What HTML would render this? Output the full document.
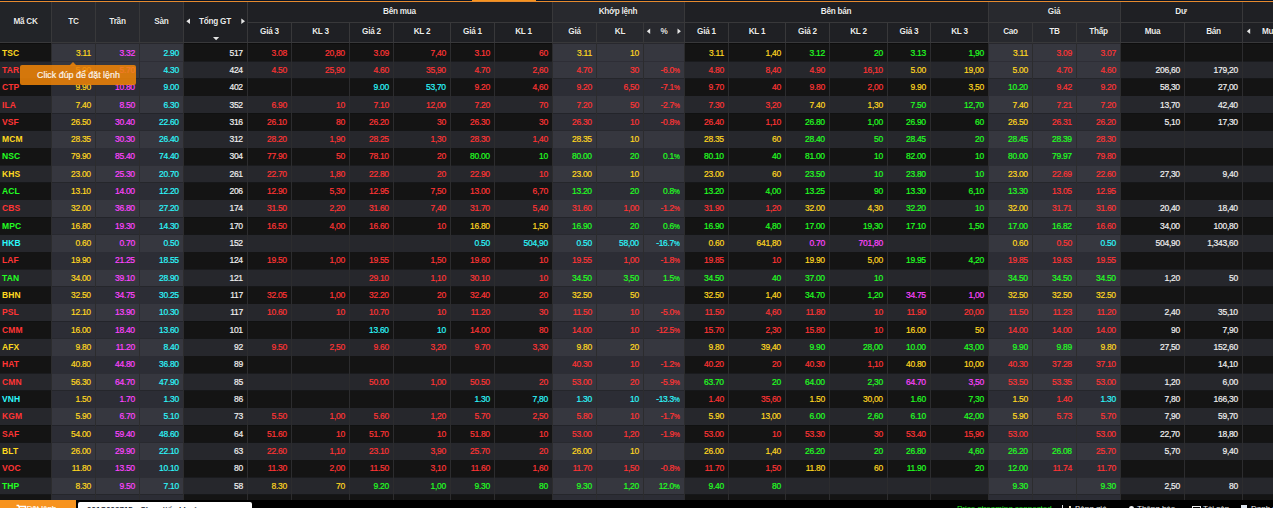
<!DOCTYPE html><html><head><meta charset="utf-8"><style>
*{margin:0;padding:0;box-sizing:border-box}
html,body{width:1273px;height:508px;overflow:hidden;background:#000}
body{position:relative;font-family:"Liberation Sans",sans-serif}
.a{position:absolute}
.t{position:absolute;white-space:nowrap;font-size:8.5px;line-height:11px;text-align:right;letter-spacing:-0.3px;-webkit-text-stroke:0.18px currentColor}
.h{position:absolute;white-space:nowrap;font-size:8.2px;letter-spacing:-0.25px;font-weight:bold;color:#ececec;text-shadow:0 0 1px #000;line-height:10px;text-align:center}
.s{font-weight:bold;text-align:left;font-size:8.5px;letter-spacing:0.1px;-webkit-text-stroke:0}
.pc{font-size:6.5px;letter-spacing:0}
</style></head><body>
<div class="a" style="left:0;top:0;width:1273px;height:1px;background:#0b1628"></div>
<div class="a" style="left:472px;top:0;width:64px;height:2px;background:#f7931e"></div>
<div class="a" style="left:0;top:1px;width:1273px;height:1px;background:#e68a2e"></div>
<div class="a" style="left:0;top:2px;width:1273px;height:40px;background:#1f2024"></div>
<div class="a" style="left:0;top:2px;width:51px;height:40px;background:#222428"></div>
<div class="a" style="left:51px;top:2px;width:132px;height:40px;background:#28292e"></div>
<div class="a" style="left:552px;top:2px;width:132px;height:40px;background:#28292e"></div>
<div class="a" style="left:988px;top:2px;width:132px;height:40px;background:#28292e"></div>
<div class="a" style="left:0;top:42px;width:1273px;height:1px;background:#38383a"></div>
<div class="a" style="left:247px;top:22px;width:1026px;height:1px;background:#38383a"></div>
<div class="a" style="left:0;top:0;width:1910px;height:762px;transform:scale(0.6666667);transform-origin:0 0">
<div class="a" style="left:0;top:64.500px;width:1910px;height:27.650px;background:#141414"></div>
<div class="a" style="left:76.500px;top:64.500px;width:198.000px;height:27.650px;background:#36373f"></div>
<div class="a" style="left:828.000px;top:64.500px;width:198.000px;height:27.650px;background:#36373f"></div>
<div class="a" style="left:1482.000px;top:64.500px;width:198.000px;height:27.650px;background:#36373f"></div>
<div class="a" style="left:0;top:92.150px;width:1910px;height:26.000px;background:#26272c"></div>
<div class="a" style="left:76.500px;top:92.150px;width:198.000px;height:26.000px;background:#36373f"></div>
<div class="a" style="left:828.000px;top:92.150px;width:198.000px;height:26.000px;background:#36373f"></div>
<div class="a" style="left:1482.000px;top:92.150px;width:198.000px;height:26.000px;background:#36373f"></div>
<div class="a" style="left:0;top:118.150px;width:1910px;height:26.000px;background:#141414"></div>
<div class="a" style="left:76.500px;top:118.150px;width:198.000px;height:26.000px;background:#2c2d35"></div>
<div class="a" style="left:828.000px;top:118.150px;width:198.000px;height:26.000px;background:#2c2d35"></div>
<div class="a" style="left:1482.000px;top:118.150px;width:198.000px;height:26.000px;background:#2c2d35"></div>
<div class="a" style="left:0;top:144.150px;width:1910px;height:26.000px;background:#26272c"></div>
<div class="a" style="left:76.500px;top:144.150px;width:198.000px;height:26.000px;background:#36373f"></div>
<div class="a" style="left:828.000px;top:144.150px;width:198.000px;height:26.000px;background:#36373f"></div>
<div class="a" style="left:1482.000px;top:144.150px;width:198.000px;height:26.000px;background:#36373f"></div>
<div class="a" style="left:0;top:170.150px;width:1910px;height:26.000px;background:#141414"></div>
<div class="a" style="left:76.500px;top:170.150px;width:198.000px;height:26.000px;background:#2c2d35"></div>
<div class="a" style="left:828.000px;top:170.150px;width:198.000px;height:26.000px;background:#2c2d35"></div>
<div class="a" style="left:1482.000px;top:170.150px;width:198.000px;height:26.000px;background:#2c2d35"></div>
<div class="a" style="left:0;top:196.150px;width:1910px;height:26.000px;background:#26272c"></div>
<div class="a" style="left:76.500px;top:196.150px;width:198.000px;height:26.000px;background:#36373f"></div>
<div class="a" style="left:828.000px;top:196.150px;width:198.000px;height:26.000px;background:#36373f"></div>
<div class="a" style="left:1482.000px;top:196.150px;width:198.000px;height:26.000px;background:#36373f"></div>
<div class="a" style="left:0;top:222.150px;width:1910px;height:26.000px;background:#141414"></div>
<div class="a" style="left:76.500px;top:222.150px;width:198.000px;height:26.000px;background:#2c2d35"></div>
<div class="a" style="left:828.000px;top:222.150px;width:198.000px;height:26.000px;background:#2c2d35"></div>
<div class="a" style="left:1482.000px;top:222.150px;width:198.000px;height:26.000px;background:#2c2d35"></div>
<div class="a" style="left:0;top:248.150px;width:1910px;height:26.000px;background:#26272c"></div>
<div class="a" style="left:76.500px;top:248.150px;width:198.000px;height:26.000px;background:#36373f"></div>
<div class="a" style="left:828.000px;top:248.150px;width:198.000px;height:26.000px;background:#36373f"></div>
<div class="a" style="left:1482.000px;top:248.150px;width:198.000px;height:26.000px;background:#36373f"></div>
<div class="a" style="left:0;top:274.150px;width:1910px;height:26.000px;background:#141414"></div>
<div class="a" style="left:76.500px;top:274.150px;width:198.000px;height:26.000px;background:#2c2d35"></div>
<div class="a" style="left:828.000px;top:274.150px;width:198.000px;height:26.000px;background:#2c2d35"></div>
<div class="a" style="left:1482.000px;top:274.150px;width:198.000px;height:26.000px;background:#2c2d35"></div>
<div class="a" style="left:0;top:300.150px;width:1910px;height:26.000px;background:#26272c"></div>
<div class="a" style="left:76.500px;top:300.150px;width:198.000px;height:26.000px;background:#36373f"></div>
<div class="a" style="left:828.000px;top:300.150px;width:198.000px;height:26.000px;background:#36373f"></div>
<div class="a" style="left:1482.000px;top:300.150px;width:198.000px;height:26.000px;background:#36373f"></div>
<div class="a" style="left:0;top:326.150px;width:1910px;height:26.000px;background:#141414"></div>
<div class="a" style="left:76.500px;top:326.150px;width:198.000px;height:26.000px;background:#2c2d35"></div>
<div class="a" style="left:828.000px;top:326.150px;width:198.000px;height:26.000px;background:#2c2d35"></div>
<div class="a" style="left:1482.000px;top:326.150px;width:198.000px;height:26.000px;background:#2c2d35"></div>
<div class="a" style="left:0;top:352.149px;width:1910px;height:26.000px;background:#26272c"></div>
<div class="a" style="left:76.500px;top:352.149px;width:198.000px;height:26.000px;background:#36373f"></div>
<div class="a" style="left:828.000px;top:352.149px;width:198.000px;height:26.000px;background:#36373f"></div>
<div class="a" style="left:1482.000px;top:352.149px;width:198.000px;height:26.000px;background:#36373f"></div>
<div class="a" style="left:0;top:378.149px;width:1910px;height:26.000px;background:#141414"></div>
<div class="a" style="left:76.500px;top:378.149px;width:198.000px;height:26.000px;background:#2c2d35"></div>
<div class="a" style="left:828.000px;top:378.149px;width:198.000px;height:26.000px;background:#2c2d35"></div>
<div class="a" style="left:1482.000px;top:378.149px;width:198.000px;height:26.000px;background:#2c2d35"></div>
<div class="a" style="left:0;top:404.149px;width:1910px;height:26.000px;background:#26272c"></div>
<div class="a" style="left:76.500px;top:404.149px;width:198.000px;height:26.000px;background:#36373f"></div>
<div class="a" style="left:828.000px;top:404.149px;width:198.000px;height:26.000px;background:#36373f"></div>
<div class="a" style="left:1482.000px;top:404.149px;width:198.000px;height:26.000px;background:#36373f"></div>
<div class="a" style="left:0;top:430.149px;width:1910px;height:26.000px;background:#141414"></div>
<div class="a" style="left:76.500px;top:430.149px;width:198.000px;height:26.000px;background:#2c2d35"></div>
<div class="a" style="left:828.000px;top:430.149px;width:198.000px;height:26.000px;background:#2c2d35"></div>
<div class="a" style="left:1482.000px;top:430.149px;width:198.000px;height:26.000px;background:#2c2d35"></div>
<div class="a" style="left:0;top:456.149px;width:1910px;height:26.000px;background:#26272c"></div>
<div class="a" style="left:76.500px;top:456.149px;width:198.000px;height:26.000px;background:#36373f"></div>
<div class="a" style="left:828.000px;top:456.149px;width:198.000px;height:26.000px;background:#36373f"></div>
<div class="a" style="left:1482.000px;top:456.149px;width:198.000px;height:26.000px;background:#36373f"></div>
<div class="a" style="left:0;top:482.149px;width:1910px;height:26.000px;background:#141414"></div>
<div class="a" style="left:76.500px;top:482.149px;width:198.000px;height:26.000px;background:#2c2d35"></div>
<div class="a" style="left:828.000px;top:482.149px;width:198.000px;height:26.000px;background:#2c2d35"></div>
<div class="a" style="left:1482.000px;top:482.149px;width:198.000px;height:26.000px;background:#2c2d35"></div>
<div class="a" style="left:0;top:508.149px;width:1910px;height:26.000px;background:#26272c"></div>
<div class="a" style="left:76.500px;top:508.149px;width:198.000px;height:26.000px;background:#36373f"></div>
<div class="a" style="left:828.000px;top:508.149px;width:198.000px;height:26.000px;background:#36373f"></div>
<div class="a" style="left:1482.000px;top:508.149px;width:198.000px;height:26.000px;background:#36373f"></div>
<div class="a" style="left:0;top:534.149px;width:1910px;height:26.000px;background:#141414"></div>
<div class="a" style="left:76.500px;top:534.149px;width:198.000px;height:26.000px;background:#2c2d35"></div>
<div class="a" style="left:828.000px;top:534.149px;width:198.000px;height:26.000px;background:#2c2d35"></div>
<div class="a" style="left:1482.000px;top:534.149px;width:198.000px;height:26.000px;background:#2c2d35"></div>
<div class="a" style="left:0;top:560.149px;width:1910px;height:26.000px;background:#26272c"></div>
<div class="a" style="left:76.500px;top:560.149px;width:198.000px;height:26.000px;background:#36373f"></div>
<div class="a" style="left:828.000px;top:560.149px;width:198.000px;height:26.000px;background:#36373f"></div>
<div class="a" style="left:1482.000px;top:560.149px;width:198.000px;height:26.000px;background:#36373f"></div>
<div class="a" style="left:0;top:586.149px;width:1910px;height:26.000px;background:#141414"></div>
<div class="a" style="left:76.500px;top:586.149px;width:198.000px;height:26.000px;background:#2c2d35"></div>
<div class="a" style="left:828.000px;top:586.149px;width:198.000px;height:26.000px;background:#2c2d35"></div>
<div class="a" style="left:1482.000px;top:586.149px;width:198.000px;height:26.000px;background:#2c2d35"></div>
<div class="a" style="left:0;top:612.149px;width:1910px;height:26.000px;background:#26272c"></div>
<div class="a" style="left:76.500px;top:612.149px;width:198.000px;height:26.000px;background:#36373f"></div>
<div class="a" style="left:828.000px;top:612.149px;width:198.000px;height:26.000px;background:#36373f"></div>
<div class="a" style="left:1482.000px;top:612.149px;width:198.000px;height:26.000px;background:#36373f"></div>
<div class="a" style="left:0;top:638.149px;width:1910px;height:26.000px;background:#141414"></div>
<div class="a" style="left:76.500px;top:638.149px;width:198.000px;height:26.000px;background:#2c2d35"></div>
<div class="a" style="left:828.000px;top:638.149px;width:198.000px;height:26.000px;background:#2c2d35"></div>
<div class="a" style="left:1482.000px;top:638.149px;width:198.000px;height:26.000px;background:#2c2d35"></div>
<div class="a" style="left:0;top:664.149px;width:1910px;height:26.000px;background:#26272c"></div>
<div class="a" style="left:76.500px;top:664.149px;width:198.000px;height:26.000px;background:#36373f"></div>
<div class="a" style="left:828.000px;top:664.149px;width:198.000px;height:26.000px;background:#36373f"></div>
<div class="a" style="left:1482.000px;top:664.149px;width:198.000px;height:26.000px;background:#36373f"></div>
<div class="a" style="left:0;top:690.149px;width:1910px;height:26.000px;background:#141414"></div>
<div class="a" style="left:76.500px;top:690.149px;width:198.000px;height:26.000px;background:#2c2d35"></div>
<div class="a" style="left:828.000px;top:690.149px;width:198.000px;height:26.000px;background:#2c2d35"></div>
<div class="a" style="left:1482.000px;top:690.149px;width:198.000px;height:26.000px;background:#2c2d35"></div>
<div class="a" style="left:0;top:716.149px;width:1910px;height:26.000px;background:#26272c"></div>
<div class="a" style="left:76.500px;top:716.149px;width:198.000px;height:26.000px;background:#36373f"></div>
<div class="a" style="left:828.000px;top:716.149px;width:198.000px;height:26.000px;background:#36373f"></div>
<div class="a" style="left:1482.000px;top:716.149px;width:198.000px;height:26.000px;background:#36373f"></div>
<div class="a" style="left:0;top:742.149px;width:1910px;height:26.000px;background:#141414"></div>
<div class="a" style="left:76.500px;top:742.149px;width:198.000px;height:26.000px;background:#2c2d35"></div>
<div class="a" style="left:828.000px;top:742.149px;width:198.000px;height:26.000px;background:#2c2d35"></div>
<div class="a" style="left:1482.000px;top:742.149px;width:198.000px;height:26.000px;background:#2c2d35"></div>
</div>
<div class="a" style="left:51px;top:2px;width:1px;height:40px;background:#38383a"></div>
<div class="a" style="left:51px;top:43px;width:1px;height:457px;background:#2c2c2e"></div>
<div class="a" style="left:95px;top:2px;width:1px;height:40px;background:#38383a"></div>
<div class="a" style="left:95px;top:43px;width:1px;height:457px;background:#2c2c2e"></div>
<div class="a" style="left:139px;top:2px;width:1px;height:40px;background:#38383a"></div>
<div class="a" style="left:139px;top:43px;width:1px;height:457px;background:#2c2c2e"></div>
<div class="a" style="left:183px;top:2px;width:1px;height:40px;background:#38383a"></div>
<div class="a" style="left:183px;top:43px;width:1px;height:457px;background:#2c2c2e"></div>
<div class="a" style="left:247px;top:2px;width:1px;height:40px;background:#38383a"></div>
<div class="a" style="left:247px;top:43px;width:1px;height:457px;background:#2c2c2e"></div>
<div class="a" style="left:291px;top:22px;width:1px;height:40px;background:#38383a"></div>
<div class="a" style="left:291px;top:43px;width:1px;height:457px;background:#2c2c2e"></div>
<div class="a" style="left:349px;top:22px;width:1px;height:40px;background:#38383a"></div>
<div class="a" style="left:349px;top:43px;width:1px;height:457px;background:#2c2c2e"></div>
<div class="a" style="left:393px;top:22px;width:1px;height:40px;background:#38383a"></div>
<div class="a" style="left:393px;top:43px;width:1px;height:457px;background:#2c2c2e"></div>
<div class="a" style="left:450px;top:22px;width:1px;height:40px;background:#38383a"></div>
<div class="a" style="left:450px;top:43px;width:1px;height:457px;background:#2c2c2e"></div>
<div class="a" style="left:494px;top:22px;width:1px;height:40px;background:#38383a"></div>
<div class="a" style="left:494px;top:43px;width:1px;height:457px;background:#2c2c2e"></div>
<div class="a" style="left:552px;top:2px;width:1px;height:40px;background:#38383a"></div>
<div class="a" style="left:552px;top:43px;width:1px;height:457px;background:#2c2c2e"></div>
<div class="a" style="left:596px;top:22px;width:1px;height:40px;background:#38383a"></div>
<div class="a" style="left:596px;top:43px;width:1px;height:457px;background:#2c2c2e"></div>
<div class="a" style="left:643px;top:22px;width:1px;height:40px;background:#38383a"></div>
<div class="a" style="left:643px;top:43px;width:1px;height:457px;background:#2c2c2e"></div>
<div class="a" style="left:684px;top:2px;width:1px;height:40px;background:#38383a"></div>
<div class="a" style="left:684px;top:43px;width:1px;height:457px;background:#2c2c2e"></div>
<div class="a" style="left:728px;top:22px;width:1px;height:40px;background:#38383a"></div>
<div class="a" style="left:728px;top:43px;width:1px;height:457px;background:#2c2c2e"></div>
<div class="a" style="left:785px;top:22px;width:1px;height:40px;background:#38383a"></div>
<div class="a" style="left:785px;top:43px;width:1px;height:457px;background:#2c2c2e"></div>
<div class="a" style="left:829px;top:22px;width:1px;height:40px;background:#38383a"></div>
<div class="a" style="left:829px;top:43px;width:1px;height:457px;background:#2c2c2e"></div>
<div class="a" style="left:887px;top:22px;width:1px;height:40px;background:#38383a"></div>
<div class="a" style="left:887px;top:43px;width:1px;height:457px;background:#2c2c2e"></div>
<div class="a" style="left:930px;top:22px;width:1px;height:40px;background:#38383a"></div>
<div class="a" style="left:930px;top:43px;width:1px;height:457px;background:#2c2c2e"></div>
<div class="a" style="left:988px;top:2px;width:1px;height:40px;background:#38383a"></div>
<div class="a" style="left:988px;top:43px;width:1px;height:457px;background:#2c2c2e"></div>
<div class="a" style="left:1032px;top:22px;width:1px;height:40px;background:#38383a"></div>
<div class="a" style="left:1032px;top:43px;width:1px;height:457px;background:#2c2c2e"></div>
<div class="a" style="left:1076px;top:22px;width:1px;height:40px;background:#38383a"></div>
<div class="a" style="left:1076px;top:43px;width:1px;height:457px;background:#2c2c2e"></div>
<div class="a" style="left:1120px;top:2px;width:1px;height:40px;background:#38383a"></div>
<div class="a" style="left:1120px;top:43px;width:1px;height:457px;background:#2c2c2e"></div>
<div class="a" style="left:1184px;top:22px;width:1px;height:40px;background:#38383a"></div>
<div class="a" style="left:1184px;top:43px;width:1px;height:457px;background:#2c2c2e"></div>
<div class="a" style="left:1242px;top:2px;width:1px;height:40px;background:#38383a"></div>
<div class="a" style="left:1242px;top:43px;width:1px;height:457px;background:#2c2c2e"></div>
<div class="h" style="left:0px;top:16.5px;width:51px">Mã CK</div>
<div class="h" style="left:52px;top:16.5px;width:43px">TC</div>
<div class="h" style="left:96px;top:16.5px;width:43px">Trần</div>
<div class="h" style="left:140px;top:16.5px;width:43px">Sàn</div>
<div class="h" style="left:183px;top:16.5px;width:64px">Tổng GT</div>
<div class="h" style="left:247px;top:7.4px;width:305px">Bên mua</div>
<div class="h" style="left:552px;top:7.4px;width:132px">Khớp lệnh</div>
<div class="h" style="left:684px;top:7.4px;width:304px">Bên bán</div>
<div class="h" style="left:988px;top:7.4px;width:132px">Giá</div>
<div class="h" style="left:1120px;top:7.4px;width:122px">Dư</div>
<div class="h" style="left:248px;top:27px;width:43px">Giá 3</div>
<div class="h" style="left:292px;top:27px;width:57px">KL 3</div>
<div class="h" style="left:350px;top:27px;width:43px">Giá 2</div>
<div class="h" style="left:394px;top:27px;width:56px">KL 2</div>
<div class="h" style="left:451px;top:27px;width:43px">Giá 1</div>
<div class="h" style="left:495px;top:27px;width:57px">KL 1</div>
<div class="h" style="left:553px;top:27px;width:43px">Giá</div>
<div class="h" style="left:597px;top:27px;width:46px">KL</div>
<div class="h" style="left:644px;top:27px;width:40px">%</div>
<div class="h" style="left:685px;top:27px;width:43px">Giá 1</div>
<div class="h" style="left:729px;top:27px;width:56px">KL 1</div>
<div class="h" style="left:786px;top:27px;width:43px">Giá 2</div>
<div class="h" style="left:830px;top:27px;width:57px">KL 2</div>
<div class="h" style="left:888px;top:27px;width:42px">Giá 3</div>
<div class="h" style="left:931px;top:27px;width:57px">KL 3</div>
<div class="h" style="left:989px;top:27px;width:43px">Cao</div>
<div class="h" style="left:1033px;top:27px;width:43px">TB</div>
<div class="h" style="left:1077px;top:27px;width:43px">Thấp</div>
<div class="h" style="left:1121px;top:27px;width:63px">Mua</div>
<div class="h" style="left:1185px;top:27px;width:57px">Bán</div>
<div class="h" style="left:1262px;top:27px;text-align:left">Mua</div>
<div class="t s" style="left:2px;top:48.00px;color:#ffd820">TSC</div>
<div class="t" style="right:1182.20px;top:48.00px;color:#ffd820">3.11</div>
<div class="t" style="right:1138.20px;top:48.00px;color:#ff44ff">3.32</div>
<div class="t" style="right:1094.20px;top:48.00px;color:#2cf8fc">2.90</div>
<div class="t" style="right:1030.20px;top:48.00px;color:#f0f0f0">517</div>
<div class="t" style="right:986.20px;top:48.00px;color:#ff3434">3.08</div>
<div class="t" style="right:928.20px;top:48.00px;color:#ff3434">20,80</div>
<div class="t" style="right:884.20px;top:48.00px;color:#ff3434">3.09</div>
<div class="t" style="right:827.20px;top:48.00px;color:#ff3434">7,40</div>
<div class="t" style="right:783.20px;top:48.00px;color:#ff3434">3.10</div>
<div class="t" style="right:725.20px;top:48.00px;color:#ff3434">60</div>
<div class="t" style="right:681.20px;top:48.00px;color:#ffd820">3.11</div>
<div class="t" style="right:634.20px;top:48.00px;color:#ffd820">10</div>
<div class="t" style="right:549.20px;top:48.00px;color:#ffd820">3.11</div>
<div class="t" style="right:492.20px;top:48.00px;color:#ffd820">1,40</div>
<div class="t" style="right:448.20px;top:48.00px;color:#22ff22">3.12</div>
<div class="t" style="right:390.20px;top:48.00px;color:#22ff22">20</div>
<div class="t" style="right:347.20px;top:48.00px;color:#22ff22">3.13</div>
<div class="t" style="right:289.20px;top:48.00px;color:#22ff22">1,90</div>
<div class="t" style="right:245.20px;top:48.00px;color:#ffd820">3.11</div>
<div class="t" style="right:201.20px;top:48.00px;color:#ff3434">3.09</div>
<div class="t" style="right:157.20px;top:48.00px;color:#ff3434">3.07</div>
<div class="t s" style="left:2px;top:65.00px;color:#ff3434">TAR</div>
<div class="t" style="right:1182.20px;top:65.00px;color:#ffd820">5.00</div>
<div class="t" style="right:1138.20px;top:65.00px;color:#ff44ff">5.70</div>
<div class="t" style="right:1094.20px;top:65.00px;color:#2cf8fc">4.30</div>
<div class="t" style="right:1030.20px;top:65.00px;color:#f0f0f0">424</div>
<div class="t" style="right:986.20px;top:65.00px;color:#ff3434">4.50</div>
<div class="t" style="right:928.20px;top:65.00px;color:#ff3434">25,90</div>
<div class="t" style="right:884.20px;top:65.00px;color:#ff3434">4.60</div>
<div class="t" style="right:827.20px;top:65.00px;color:#ff3434">35,90</div>
<div class="t" style="right:783.20px;top:65.00px;color:#ff3434">4.70</div>
<div class="t" style="right:725.20px;top:65.00px;color:#ff3434">2,60</div>
<div class="t" style="right:681.20px;top:65.00px;color:#ff3434">4.70</div>
<div class="t" style="right:634.20px;top:65.00px;color:#ff3434">30</div>
<div class="t" style="right:593.20px;top:65.00px;color:#ff3434">-6.0<span class="pc">%</span></div>
<div class="t" style="right:549.20px;top:65.00px;color:#ff3434">4.80</div>
<div class="t" style="right:492.20px;top:65.00px;color:#ff3434">8,40</div>
<div class="t" style="right:448.20px;top:65.00px;color:#ff3434">4.90</div>
<div class="t" style="right:390.20px;top:65.00px;color:#ff3434">16,10</div>
<div class="t" style="right:347.20px;top:65.00px;color:#ffd820">5.00</div>
<div class="t" style="right:289.20px;top:65.00px;color:#ffd820">19,00</div>
<div class="t" style="right:245.20px;top:65.00px;color:#ffd820">5.00</div>
<div class="t" style="right:201.20px;top:65.00px;color:#ff3434">4.70</div>
<div class="t" style="right:157.20px;top:65.00px;color:#ff3434">4.60</div>
<div class="t" style="right:93.20px;top:65.00px;color:#f0f0f0">206,60</div>
<div class="t" style="right:35.20px;top:65.00px;color:#f0f0f0">179,20</div>
<div class="t s" style="left:2px;top:82.00px;color:#ff3434">CTP</div>
<div class="t" style="right:1182.20px;top:82.00px;color:#ffd820">9.90</div>
<div class="t" style="right:1138.20px;top:82.00px;color:#ff44ff">10.80</div>
<div class="t" style="right:1094.20px;top:82.00px;color:#2cf8fc">9.00</div>
<div class="t" style="right:1030.20px;top:82.00px;color:#f0f0f0">402</div>
<div class="t" style="right:884.20px;top:82.00px;color:#2cf8fc">9.00</div>
<div class="t" style="right:827.20px;top:82.00px;color:#2cf8fc">53,70</div>
<div class="t" style="right:783.20px;top:82.00px;color:#ff3434">9.20</div>
<div class="t" style="right:725.20px;top:82.00px;color:#ff3434">4,60</div>
<div class="t" style="right:681.20px;top:82.00px;color:#ff3434">9.20</div>
<div class="t" style="right:634.20px;top:82.00px;color:#ff3434">6,50</div>
<div class="t" style="right:593.20px;top:82.00px;color:#ff3434">-7.1<span class="pc">%</span></div>
<div class="t" style="right:549.20px;top:82.00px;color:#ff3434">9.70</div>
<div class="t" style="right:492.20px;top:82.00px;color:#ff3434">40</div>
<div class="t" style="right:448.20px;top:82.00px;color:#ff3434">9.80</div>
<div class="t" style="right:390.20px;top:82.00px;color:#ff3434">2,00</div>
<div class="t" style="right:347.20px;top:82.00px;color:#ffd820">9.90</div>
<div class="t" style="right:289.20px;top:82.00px;color:#ffd820">3,50</div>
<div class="t" style="right:245.20px;top:82.00px;color:#22ff22">10.20</div>
<div class="t" style="right:201.20px;top:82.00px;color:#ff3434">9.42</div>
<div class="t" style="right:157.20px;top:82.00px;color:#ff3434">9.20</div>
<div class="t" style="right:93.20px;top:82.00px;color:#f0f0f0">58,30</div>
<div class="t" style="right:35.20px;top:82.00px;color:#f0f0f0">27,00</div>
<div class="t s" style="left:2px;top:100.00px;color:#ff3434">ILA</div>
<div class="t" style="right:1182.20px;top:100.00px;color:#ffd820">7.40</div>
<div class="t" style="right:1138.20px;top:100.00px;color:#ff44ff">8.50</div>
<div class="t" style="right:1094.20px;top:100.00px;color:#2cf8fc">6.30</div>
<div class="t" style="right:1030.20px;top:100.00px;color:#f0f0f0">352</div>
<div class="t" style="right:986.20px;top:100.00px;color:#ff3434">6.90</div>
<div class="t" style="right:928.20px;top:100.00px;color:#ff3434">10</div>
<div class="t" style="right:884.20px;top:100.00px;color:#ff3434">7.10</div>
<div class="t" style="right:827.20px;top:100.00px;color:#ff3434">12,00</div>
<div class="t" style="right:783.20px;top:100.00px;color:#ff3434">7.20</div>
<div class="t" style="right:725.20px;top:100.00px;color:#ff3434">70</div>
<div class="t" style="right:681.20px;top:100.00px;color:#ff3434">7.20</div>
<div class="t" style="right:634.20px;top:100.00px;color:#ff3434">50</div>
<div class="t" style="right:593.20px;top:100.00px;color:#ff3434">-2.7<span class="pc">%</span></div>
<div class="t" style="right:549.20px;top:100.00px;color:#ff3434">7.30</div>
<div class="t" style="right:492.20px;top:100.00px;color:#ff3434">3,20</div>
<div class="t" style="right:448.20px;top:100.00px;color:#ffd820">7.40</div>
<div class="t" style="right:390.20px;top:100.00px;color:#ffd820">1,30</div>
<div class="t" style="right:347.20px;top:100.00px;color:#22ff22">7.50</div>
<div class="t" style="right:289.20px;top:100.00px;color:#22ff22">12,70</div>
<div class="t" style="right:245.20px;top:100.00px;color:#ffd820">7.40</div>
<div class="t" style="right:201.20px;top:100.00px;color:#ff3434">7.21</div>
<div class="t" style="right:157.20px;top:100.00px;color:#ff3434">7.20</div>
<div class="t" style="right:93.20px;top:100.00px;color:#f0f0f0">13,70</div>
<div class="t" style="right:35.20px;top:100.00px;color:#f0f0f0">42,40</div>
<div class="t s" style="left:2px;top:117.00px;color:#ff3434">VSF</div>
<div class="t" style="right:1182.20px;top:117.00px;color:#ffd820">26.50</div>
<div class="t" style="right:1138.20px;top:117.00px;color:#ff44ff">30.40</div>
<div class="t" style="right:1094.20px;top:117.00px;color:#2cf8fc">22.60</div>
<div class="t" style="right:1030.20px;top:117.00px;color:#f0f0f0">316</div>
<div class="t" style="right:986.20px;top:117.00px;color:#ff3434">26.10</div>
<div class="t" style="right:928.20px;top:117.00px;color:#ff3434">80</div>
<div class="t" style="right:884.20px;top:117.00px;color:#ff3434">26.20</div>
<div class="t" style="right:827.20px;top:117.00px;color:#ff3434">30</div>
<div class="t" style="right:783.20px;top:117.00px;color:#ff3434">26.30</div>
<div class="t" style="right:725.20px;top:117.00px;color:#ff3434">30</div>
<div class="t" style="right:681.20px;top:117.00px;color:#ff3434">26.30</div>
<div class="t" style="right:634.20px;top:117.00px;color:#ff3434">10</div>
<div class="t" style="right:593.20px;top:117.00px;color:#ff3434">-0.8<span class="pc">%</span></div>
<div class="t" style="right:549.20px;top:117.00px;color:#ff3434">26.40</div>
<div class="t" style="right:492.20px;top:117.00px;color:#ff3434">1,10</div>
<div class="t" style="right:448.20px;top:117.00px;color:#22ff22">26.80</div>
<div class="t" style="right:390.20px;top:117.00px;color:#22ff22">1,00</div>
<div class="t" style="right:347.20px;top:117.00px;color:#22ff22">26.90</div>
<div class="t" style="right:289.20px;top:117.00px;color:#22ff22">60</div>
<div class="t" style="right:245.20px;top:117.00px;color:#ffd820">26.50</div>
<div class="t" style="right:201.20px;top:117.00px;color:#ff3434">26.31</div>
<div class="t" style="right:157.20px;top:117.00px;color:#ff3434">26.20</div>
<div class="t" style="right:93.20px;top:117.00px;color:#f0f0f0">5,10</div>
<div class="t" style="right:35.20px;top:117.00px;color:#f0f0f0">17,30</div>
<div class="t s" style="left:2px;top:134.00px;color:#ffd820">MCM</div>
<div class="t" style="right:1182.20px;top:134.00px;color:#ffd820">28.35</div>
<div class="t" style="right:1138.20px;top:134.00px;color:#ff44ff">30.30</div>
<div class="t" style="right:1094.20px;top:134.00px;color:#2cf8fc">26.40</div>
<div class="t" style="right:1030.20px;top:134.00px;color:#f0f0f0">312</div>
<div class="t" style="right:986.20px;top:134.00px;color:#ff3434">28.20</div>
<div class="t" style="right:928.20px;top:134.00px;color:#ff3434">1,90</div>
<div class="t" style="right:884.20px;top:134.00px;color:#ff3434">28.25</div>
<div class="t" style="right:827.20px;top:134.00px;color:#ff3434">1,30</div>
<div class="t" style="right:783.20px;top:134.00px;color:#ff3434">28.30</div>
<div class="t" style="right:725.20px;top:134.00px;color:#ff3434">1,40</div>
<div class="t" style="right:681.20px;top:134.00px;color:#ffd820">28.35</div>
<div class="t" style="right:634.20px;top:134.00px;color:#ffd820">10</div>
<div class="t" style="right:549.20px;top:134.00px;color:#ffd820">28.35</div>
<div class="t" style="right:492.20px;top:134.00px;color:#ffd820">60</div>
<div class="t" style="right:448.20px;top:134.00px;color:#22ff22">28.40</div>
<div class="t" style="right:390.20px;top:134.00px;color:#22ff22">50</div>
<div class="t" style="right:347.20px;top:134.00px;color:#22ff22">28.45</div>
<div class="t" style="right:289.20px;top:134.00px;color:#22ff22">20</div>
<div class="t" style="right:245.20px;top:134.00px;color:#22ff22">28.45</div>
<div class="t" style="right:201.20px;top:134.00px;color:#22ff22">28.39</div>
<div class="t" style="right:157.20px;top:134.00px;color:#ff3434">28.30</div>
<div class="t s" style="left:2px;top:151.00px;color:#22ff22">NSC</div>
<div class="t" style="right:1182.20px;top:151.00px;color:#ffd820">79.90</div>
<div class="t" style="right:1138.20px;top:151.00px;color:#ff44ff">85.40</div>
<div class="t" style="right:1094.20px;top:151.00px;color:#2cf8fc">74.40</div>
<div class="t" style="right:1030.20px;top:151.00px;color:#f0f0f0">304</div>
<div class="t" style="right:986.20px;top:151.00px;color:#ff3434">77.90</div>
<div class="t" style="right:928.20px;top:151.00px;color:#ff3434">50</div>
<div class="t" style="right:884.20px;top:151.00px;color:#ff3434">78.10</div>
<div class="t" style="right:827.20px;top:151.00px;color:#ff3434">20</div>
<div class="t" style="right:783.20px;top:151.00px;color:#22ff22">80.00</div>
<div class="t" style="right:725.20px;top:151.00px;color:#22ff22">10</div>
<div class="t" style="right:681.20px;top:151.00px;color:#22ff22">80.00</div>
<div class="t" style="right:634.20px;top:151.00px;color:#22ff22">20</div>
<div class="t" style="right:593.20px;top:151.00px;color:#22ff22">0.1<span class="pc">%</span></div>
<div class="t" style="right:549.20px;top:151.00px;color:#22ff22">80.10</div>
<div class="t" style="right:492.20px;top:151.00px;color:#22ff22">40</div>
<div class="t" style="right:448.20px;top:151.00px;color:#22ff22">81.00</div>
<div class="t" style="right:390.20px;top:151.00px;color:#22ff22">10</div>
<div class="t" style="right:347.20px;top:151.00px;color:#22ff22">82.00</div>
<div class="t" style="right:289.20px;top:151.00px;color:#22ff22">10</div>
<div class="t" style="right:245.20px;top:151.00px;color:#22ff22">80.00</div>
<div class="t" style="right:201.20px;top:151.00px;color:#22ff22">79.97</div>
<div class="t" style="right:157.20px;top:151.00px;color:#ff3434">79.80</div>
<div class="t s" style="left:2px;top:169.00px;color:#ffd820">KHS</div>
<div class="t" style="right:1182.20px;top:169.00px;color:#ffd820">23.00</div>
<div class="t" style="right:1138.20px;top:169.00px;color:#ff44ff">25.30</div>
<div class="t" style="right:1094.20px;top:169.00px;color:#2cf8fc">20.70</div>
<div class="t" style="right:1030.20px;top:169.00px;color:#f0f0f0">261</div>
<div class="t" style="right:986.20px;top:169.00px;color:#ff3434">22.70</div>
<div class="t" style="right:928.20px;top:169.00px;color:#ff3434">1,80</div>
<div class="t" style="right:884.20px;top:169.00px;color:#ff3434">22.80</div>
<div class="t" style="right:827.20px;top:169.00px;color:#ff3434">20</div>
<div class="t" style="right:783.20px;top:169.00px;color:#ff3434">22.90</div>
<div class="t" style="right:725.20px;top:169.00px;color:#ff3434">10</div>
<div class="t" style="right:681.20px;top:169.00px;color:#ffd820">23.00</div>
<div class="t" style="right:634.20px;top:169.00px;color:#ffd820">10</div>
<div class="t" style="right:549.20px;top:169.00px;color:#ffd820">23.00</div>
<div class="t" style="right:492.20px;top:169.00px;color:#ffd820">60</div>
<div class="t" style="right:448.20px;top:169.00px;color:#22ff22">23.50</div>
<div class="t" style="right:390.20px;top:169.00px;color:#22ff22">10</div>
<div class="t" style="right:347.20px;top:169.00px;color:#22ff22">23.80</div>
<div class="t" style="right:289.20px;top:169.00px;color:#22ff22">10</div>
<div class="t" style="right:245.20px;top:169.00px;color:#ffd820">23.00</div>
<div class="t" style="right:201.20px;top:169.00px;color:#ff3434">22.69</div>
<div class="t" style="right:157.20px;top:169.00px;color:#ff3434">22.60</div>
<div class="t" style="right:93.20px;top:169.00px;color:#f0f0f0">27,30</div>
<div class="t" style="right:35.20px;top:169.00px;color:#f0f0f0">9,40</div>
<div class="t s" style="left:2px;top:186.00px;color:#22ff22">ACL</div>
<div class="t" style="right:1182.20px;top:186.00px;color:#ffd820">13.10</div>
<div class="t" style="right:1138.20px;top:186.00px;color:#ff44ff">14.00</div>
<div class="t" style="right:1094.20px;top:186.00px;color:#2cf8fc">12.20</div>
<div class="t" style="right:1030.20px;top:186.00px;color:#f0f0f0">206</div>
<div class="t" style="right:986.20px;top:186.00px;color:#ff3434">12.90</div>
<div class="t" style="right:928.20px;top:186.00px;color:#ff3434">5,30</div>
<div class="t" style="right:884.20px;top:186.00px;color:#ff3434">12.95</div>
<div class="t" style="right:827.20px;top:186.00px;color:#ff3434">7,50</div>
<div class="t" style="right:783.20px;top:186.00px;color:#ff3434">13.00</div>
<div class="t" style="right:725.20px;top:186.00px;color:#ff3434">6,70</div>
<div class="t" style="right:681.20px;top:186.00px;color:#22ff22">13.20</div>
<div class="t" style="right:634.20px;top:186.00px;color:#22ff22">20</div>
<div class="t" style="right:593.20px;top:186.00px;color:#22ff22">0.8<span class="pc">%</span></div>
<div class="t" style="right:549.20px;top:186.00px;color:#22ff22">13.20</div>
<div class="t" style="right:492.20px;top:186.00px;color:#22ff22">4,00</div>
<div class="t" style="right:448.20px;top:186.00px;color:#22ff22">13.25</div>
<div class="t" style="right:390.20px;top:186.00px;color:#22ff22">90</div>
<div class="t" style="right:347.20px;top:186.00px;color:#22ff22">13.30</div>
<div class="t" style="right:289.20px;top:186.00px;color:#22ff22">6,10</div>
<div class="t" style="right:245.20px;top:186.00px;color:#22ff22">13.30</div>
<div class="t" style="right:201.20px;top:186.00px;color:#ff3434">13.05</div>
<div class="t" style="right:157.20px;top:186.00px;color:#ff3434">12.95</div>
<div class="t s" style="left:2px;top:203.00px;color:#ff3434">CBS</div>
<div class="t" style="right:1182.20px;top:203.00px;color:#ffd820">32.00</div>
<div class="t" style="right:1138.20px;top:203.00px;color:#ff44ff">36.80</div>
<div class="t" style="right:1094.20px;top:203.00px;color:#2cf8fc">27.20</div>
<div class="t" style="right:1030.20px;top:203.00px;color:#f0f0f0">174</div>
<div class="t" style="right:986.20px;top:203.00px;color:#ff3434">31.50</div>
<div class="t" style="right:928.20px;top:203.00px;color:#ff3434">2,20</div>
<div class="t" style="right:884.20px;top:203.00px;color:#ff3434">31.60</div>
<div class="t" style="right:827.20px;top:203.00px;color:#ff3434">7,40</div>
<div class="t" style="right:783.20px;top:203.00px;color:#ff3434">31.70</div>
<div class="t" style="right:725.20px;top:203.00px;color:#ff3434">5,40</div>
<div class="t" style="right:681.20px;top:203.00px;color:#ff3434">31.60</div>
<div class="t" style="right:634.20px;top:203.00px;color:#ff3434">1,00</div>
<div class="t" style="right:593.20px;top:203.00px;color:#ff3434">-1.2<span class="pc">%</span></div>
<div class="t" style="right:549.20px;top:203.00px;color:#ff3434">31.90</div>
<div class="t" style="right:492.20px;top:203.00px;color:#ff3434">1,20</div>
<div class="t" style="right:448.20px;top:203.00px;color:#ffd820">32.00</div>
<div class="t" style="right:390.20px;top:203.00px;color:#ffd820">4,30</div>
<div class="t" style="right:347.20px;top:203.00px;color:#22ff22">32.20</div>
<div class="t" style="right:289.20px;top:203.00px;color:#22ff22">10</div>
<div class="t" style="right:245.20px;top:203.00px;color:#ffd820">32.00</div>
<div class="t" style="right:201.20px;top:203.00px;color:#ff3434">31.71</div>
<div class="t" style="right:157.20px;top:203.00px;color:#ff3434">31.60</div>
<div class="t" style="right:93.20px;top:203.00px;color:#f0f0f0">20,40</div>
<div class="t" style="right:35.20px;top:203.00px;color:#f0f0f0">18,40</div>
<div class="t s" style="left:2px;top:221.00px;color:#22ff22">MPC</div>
<div class="t" style="right:1182.20px;top:221.00px;color:#ffd820">16.80</div>
<div class="t" style="right:1138.20px;top:221.00px;color:#ff44ff">19.30</div>
<div class="t" style="right:1094.20px;top:221.00px;color:#2cf8fc">14.30</div>
<div class="t" style="right:1030.20px;top:221.00px;color:#f0f0f0">170</div>
<div class="t" style="right:986.20px;top:221.00px;color:#ff3434">16.50</div>
<div class="t" style="right:928.20px;top:221.00px;color:#ff3434">4,00</div>
<div class="t" style="right:884.20px;top:221.00px;color:#ff3434">16.60</div>
<div class="t" style="right:827.20px;top:221.00px;color:#ff3434">10</div>
<div class="t" style="right:783.20px;top:221.00px;color:#ffd820">16.80</div>
<div class="t" style="right:725.20px;top:221.00px;color:#ffd820">1,50</div>
<div class="t" style="right:681.20px;top:221.00px;color:#22ff22">16.90</div>
<div class="t" style="right:634.20px;top:221.00px;color:#22ff22">20</div>
<div class="t" style="right:593.20px;top:221.00px;color:#22ff22">0.6<span class="pc">%</span></div>
<div class="t" style="right:549.20px;top:221.00px;color:#22ff22">16.90</div>
<div class="t" style="right:492.20px;top:221.00px;color:#22ff22">4,80</div>
<div class="t" style="right:448.20px;top:221.00px;color:#22ff22">17.00</div>
<div class="t" style="right:390.20px;top:221.00px;color:#22ff22">19,30</div>
<div class="t" style="right:347.20px;top:221.00px;color:#22ff22">17.10</div>
<div class="t" style="right:289.20px;top:221.00px;color:#22ff22">1,50</div>
<div class="t" style="right:245.20px;top:221.00px;color:#22ff22">17.00</div>
<div class="t" style="right:201.20px;top:221.00px;color:#22ff22">16.82</div>
<div class="t" style="right:157.20px;top:221.00px;color:#ff3434">16.60</div>
<div class="t" style="right:93.20px;top:221.00px;color:#f0f0f0">34,00</div>
<div class="t" style="right:35.20px;top:221.00px;color:#f0f0f0">100,80</div>
<div class="t s" style="left:2px;top:238.00px;color:#2cf8fc">HKB</div>
<div class="t" style="right:1182.20px;top:238.00px;color:#ffd820">0.60</div>
<div class="t" style="right:1138.20px;top:238.00px;color:#ff44ff">0.70</div>
<div class="t" style="right:1094.20px;top:238.00px;color:#2cf8fc">0.50</div>
<div class="t" style="right:1030.20px;top:238.00px;color:#f0f0f0">152</div>
<div class="t" style="right:783.20px;top:238.00px;color:#2cf8fc">0.50</div>
<div class="t" style="right:725.20px;top:238.00px;color:#2cf8fc">504,90</div>
<div class="t" style="right:681.20px;top:238.00px;color:#2cf8fc">0.50</div>
<div class="t" style="right:634.20px;top:238.00px;color:#2cf8fc">58,00</div>
<div class="t" style="right:593.20px;top:238.00px;color:#2cf8fc">-16.7<span class="pc">%</span></div>
<div class="t" style="right:549.20px;top:238.00px;color:#ffd820">0.60</div>
<div class="t" style="right:492.20px;top:238.00px;color:#ffd820">641,80</div>
<div class="t" style="right:448.20px;top:238.00px;color:#ff44ff">0.70</div>
<div class="t" style="right:390.20px;top:238.00px;color:#ff44ff">701,80</div>
<div class="t" style="right:245.20px;top:238.00px;color:#ffd820">0.60</div>
<div class="t" style="right:201.20px;top:238.00px;color:#ff3434">0.50</div>
<div class="t" style="right:157.20px;top:238.00px;color:#2cf8fc">0.50</div>
<div class="t" style="right:93.20px;top:238.00px;color:#f0f0f0">504,90</div>
<div class="t" style="right:35.20px;top:238.00px;color:#f0f0f0">1,343,60</div>
<div class="t s" style="left:2px;top:255.00px;color:#ff3434">LAF</div>
<div class="t" style="right:1182.20px;top:255.00px;color:#ffd820">19.90</div>
<div class="t" style="right:1138.20px;top:255.00px;color:#ff44ff">21.25</div>
<div class="t" style="right:1094.20px;top:255.00px;color:#2cf8fc">18.55</div>
<div class="t" style="right:1030.20px;top:255.00px;color:#f0f0f0">124</div>
<div class="t" style="right:986.20px;top:255.00px;color:#ff3434">19.50</div>
<div class="t" style="right:928.20px;top:255.00px;color:#ff3434">1,00</div>
<div class="t" style="right:884.20px;top:255.00px;color:#ff3434">19.55</div>
<div class="t" style="right:827.20px;top:255.00px;color:#ff3434">1,50</div>
<div class="t" style="right:783.20px;top:255.00px;color:#ff3434">19.60</div>
<div class="t" style="right:725.20px;top:255.00px;color:#ff3434">10</div>
<div class="t" style="right:681.20px;top:255.00px;color:#ff3434">19.55</div>
<div class="t" style="right:634.20px;top:255.00px;color:#ff3434">1,00</div>
<div class="t" style="right:593.20px;top:255.00px;color:#ff3434">-1.8<span class="pc">%</span></div>
<div class="t" style="right:549.20px;top:255.00px;color:#ff3434">19.85</div>
<div class="t" style="right:492.20px;top:255.00px;color:#ff3434">10</div>
<div class="t" style="right:448.20px;top:255.00px;color:#ffd820">19.90</div>
<div class="t" style="right:390.20px;top:255.00px;color:#ffd820">5,00</div>
<div class="t" style="right:347.20px;top:255.00px;color:#22ff22">19.95</div>
<div class="t" style="right:289.20px;top:255.00px;color:#22ff22">4,20</div>
<div class="t" style="right:245.20px;top:255.00px;color:#ff3434">19.85</div>
<div class="t" style="right:201.20px;top:255.00px;color:#ff3434">19.63</div>
<div class="t" style="right:157.20px;top:255.00px;color:#ff3434">19.55</div>
<div class="t s" style="left:2px;top:273.00px;color:#22ff22">TAN</div>
<div class="t" style="right:1182.20px;top:273.00px;color:#ffd820">34.00</div>
<div class="t" style="right:1138.20px;top:273.00px;color:#ff44ff">39.10</div>
<div class="t" style="right:1094.20px;top:273.00px;color:#2cf8fc">28.90</div>
<div class="t" style="right:1030.20px;top:273.00px;color:#f0f0f0">121</div>
<div class="t" style="right:884.20px;top:273.00px;color:#ff3434">29.10</div>
<div class="t" style="right:827.20px;top:273.00px;color:#ff3434">1,10</div>
<div class="t" style="right:783.20px;top:273.00px;color:#ff3434">30.10</div>
<div class="t" style="right:725.20px;top:273.00px;color:#ff3434">10</div>
<div class="t" style="right:681.20px;top:273.00px;color:#22ff22">34.50</div>
<div class="t" style="right:634.20px;top:273.00px;color:#22ff22">3,50</div>
<div class="t" style="right:593.20px;top:273.00px;color:#22ff22">1.5<span class="pc">%</span></div>
<div class="t" style="right:549.20px;top:273.00px;color:#22ff22">34.50</div>
<div class="t" style="right:492.20px;top:273.00px;color:#22ff22">40</div>
<div class="t" style="right:448.20px;top:273.00px;color:#22ff22">37.00</div>
<div class="t" style="right:390.20px;top:273.00px;color:#22ff22">10</div>
<div class="t" style="right:245.20px;top:273.00px;color:#22ff22">34.50</div>
<div class="t" style="right:201.20px;top:273.00px;color:#22ff22">34.50</div>
<div class="t" style="right:157.20px;top:273.00px;color:#22ff22">34.50</div>
<div class="t" style="right:93.20px;top:273.00px;color:#f0f0f0">1,20</div>
<div class="t" style="right:35.20px;top:273.00px;color:#f0f0f0">50</div>
<div class="t s" style="left:2px;top:290.00px;color:#ffd820">BHN</div>
<div class="t" style="right:1182.20px;top:290.00px;color:#ffd820">32.50</div>
<div class="t" style="right:1138.20px;top:290.00px;color:#ff44ff">34.75</div>
<div class="t" style="right:1094.20px;top:290.00px;color:#2cf8fc">30.25</div>
<div class="t" style="right:1030.20px;top:290.00px;color:#f0f0f0">117</div>
<div class="t" style="right:986.20px;top:290.00px;color:#ff3434">32.05</div>
<div class="t" style="right:928.20px;top:290.00px;color:#ff3434">1,00</div>
<div class="t" style="right:884.20px;top:290.00px;color:#ff3434">32.20</div>
<div class="t" style="right:827.20px;top:290.00px;color:#ff3434">20</div>
<div class="t" style="right:783.20px;top:290.00px;color:#ff3434">32.40</div>
<div class="t" style="right:725.20px;top:290.00px;color:#ff3434">20</div>
<div class="t" style="right:681.20px;top:290.00px;color:#ffd820">32.50</div>
<div class="t" style="right:634.20px;top:290.00px;color:#ffd820">50</div>
<div class="t" style="right:549.20px;top:290.00px;color:#ffd820">32.50</div>
<div class="t" style="right:492.20px;top:290.00px;color:#ffd820">1,40</div>
<div class="t" style="right:448.20px;top:290.00px;color:#22ff22">34.70</div>
<div class="t" style="right:390.20px;top:290.00px;color:#22ff22">1,20</div>
<div class="t" style="right:347.20px;top:290.00px;color:#ff44ff">34.75</div>
<div class="t" style="right:289.20px;top:290.00px;color:#ff44ff">1,00</div>
<div class="t" style="right:245.20px;top:290.00px;color:#ffd820">32.50</div>
<div class="t" style="right:201.20px;top:290.00px;color:#ffd820">32.50</div>
<div class="t" style="right:157.20px;top:290.00px;color:#ffd820">32.50</div>
<div class="t s" style="left:2px;top:307.00px;color:#ff3434">PSL</div>
<div class="t" style="right:1182.20px;top:307.00px;color:#ffd820">12.10</div>
<div class="t" style="right:1138.20px;top:307.00px;color:#ff44ff">13.90</div>
<div class="t" style="right:1094.20px;top:307.00px;color:#2cf8fc">10.30</div>
<div class="t" style="right:1030.20px;top:307.00px;color:#f0f0f0">117</div>
<div class="t" style="right:986.20px;top:307.00px;color:#ff3434">10.60</div>
<div class="t" style="right:928.20px;top:307.00px;color:#ff3434">10</div>
<div class="t" style="right:884.20px;top:307.00px;color:#ff3434">10.70</div>
<div class="t" style="right:827.20px;top:307.00px;color:#ff3434">10</div>
<div class="t" style="right:783.20px;top:307.00px;color:#ff3434">11.20</div>
<div class="t" style="right:725.20px;top:307.00px;color:#ff3434">30</div>
<div class="t" style="right:681.20px;top:307.00px;color:#ff3434">11.50</div>
<div class="t" style="right:634.20px;top:307.00px;color:#ff3434">10</div>
<div class="t" style="right:593.20px;top:307.00px;color:#ff3434">-5.0<span class="pc">%</span></div>
<div class="t" style="right:549.20px;top:307.00px;color:#ff3434">11.50</div>
<div class="t" style="right:492.20px;top:307.00px;color:#ff3434">4,60</div>
<div class="t" style="right:448.20px;top:307.00px;color:#ff3434">11.80</div>
<div class="t" style="right:390.20px;top:307.00px;color:#ff3434">10</div>
<div class="t" style="right:347.20px;top:307.00px;color:#ff3434">11.90</div>
<div class="t" style="right:289.20px;top:307.00px;color:#ff3434">20,00</div>
<div class="t" style="right:245.20px;top:307.00px;color:#ff3434">11.50</div>
<div class="t" style="right:201.20px;top:307.00px;color:#ff3434">11.23</div>
<div class="t" style="right:157.20px;top:307.00px;color:#ff3434">11.20</div>
<div class="t" style="right:93.20px;top:307.00px;color:#f0f0f0">2,40</div>
<div class="t" style="right:35.20px;top:307.00px;color:#f0f0f0">35,10</div>
<div class="t s" style="left:2px;top:325.00px;color:#ff3434">CMM</div>
<div class="t" style="right:1182.20px;top:325.00px;color:#ffd820">16.00</div>
<div class="t" style="right:1138.20px;top:325.00px;color:#ff44ff">18.40</div>
<div class="t" style="right:1094.20px;top:325.00px;color:#2cf8fc">13.60</div>
<div class="t" style="right:1030.20px;top:325.00px;color:#f0f0f0">101</div>
<div class="t" style="right:884.20px;top:325.00px;color:#2cf8fc">13.60</div>
<div class="t" style="right:827.20px;top:325.00px;color:#2cf8fc">10</div>
<div class="t" style="right:783.20px;top:325.00px;color:#ff3434">14.00</div>
<div class="t" style="right:725.20px;top:325.00px;color:#ff3434">80</div>
<div class="t" style="right:681.20px;top:325.00px;color:#ff3434">14.00</div>
<div class="t" style="right:634.20px;top:325.00px;color:#ff3434">10</div>
<div class="t" style="right:593.20px;top:325.00px;color:#ff3434">-12.5<span class="pc">%</span></div>
<div class="t" style="right:549.20px;top:325.00px;color:#ff3434">15.70</div>
<div class="t" style="right:492.20px;top:325.00px;color:#ff3434">2,30</div>
<div class="t" style="right:448.20px;top:325.00px;color:#ff3434">15.80</div>
<div class="t" style="right:390.20px;top:325.00px;color:#ff3434">10</div>
<div class="t" style="right:347.20px;top:325.00px;color:#ffd820">16.00</div>
<div class="t" style="right:289.20px;top:325.00px;color:#ffd820">50</div>
<div class="t" style="right:245.20px;top:325.00px;color:#ff3434">14.00</div>
<div class="t" style="right:201.20px;top:325.00px;color:#ff3434">14.00</div>
<div class="t" style="right:157.20px;top:325.00px;color:#ff3434">14.00</div>
<div class="t" style="right:93.20px;top:325.00px;color:#f0f0f0">90</div>
<div class="t" style="right:35.20px;top:325.00px;color:#f0f0f0">7,90</div>
<div class="t s" style="left:2px;top:342.00px;color:#ffd820">AFX</div>
<div class="t" style="right:1182.20px;top:342.00px;color:#ffd820">9.80</div>
<div class="t" style="right:1138.20px;top:342.00px;color:#ff44ff">11.20</div>
<div class="t" style="right:1094.20px;top:342.00px;color:#2cf8fc">8.40</div>
<div class="t" style="right:1030.20px;top:342.00px;color:#f0f0f0">92</div>
<div class="t" style="right:986.20px;top:342.00px;color:#ff3434">9.50</div>
<div class="t" style="right:928.20px;top:342.00px;color:#ff3434">2,50</div>
<div class="t" style="right:884.20px;top:342.00px;color:#ff3434">9.60</div>
<div class="t" style="right:827.20px;top:342.00px;color:#ff3434">3,20</div>
<div class="t" style="right:783.20px;top:342.00px;color:#ff3434">9.70</div>
<div class="t" style="right:725.20px;top:342.00px;color:#ff3434">3,30</div>
<div class="t" style="right:681.20px;top:342.00px;color:#ffd820">9.80</div>
<div class="t" style="right:634.20px;top:342.00px;color:#ffd820">20</div>
<div class="t" style="right:549.20px;top:342.00px;color:#ffd820">9.80</div>
<div class="t" style="right:492.20px;top:342.00px;color:#ffd820">39,40</div>
<div class="t" style="right:448.20px;top:342.00px;color:#22ff22">9.90</div>
<div class="t" style="right:390.20px;top:342.00px;color:#22ff22">28,00</div>
<div class="t" style="right:347.20px;top:342.00px;color:#22ff22">10.00</div>
<div class="t" style="right:289.20px;top:342.00px;color:#22ff22">43,00</div>
<div class="t" style="right:245.20px;top:342.00px;color:#22ff22">9.90</div>
<div class="t" style="right:201.20px;top:342.00px;color:#22ff22">9.89</div>
<div class="t" style="right:157.20px;top:342.00px;color:#ffd820">9.80</div>
<div class="t" style="right:93.20px;top:342.00px;color:#f0f0f0">27,50</div>
<div class="t" style="right:35.20px;top:342.00px;color:#f0f0f0">152,60</div>
<div class="t s" style="left:2px;top:359.00px;color:#ff3434">HAT</div>
<div class="t" style="right:1182.20px;top:359.00px;color:#ffd820">40.80</div>
<div class="t" style="right:1138.20px;top:359.00px;color:#ff44ff">44.80</div>
<div class="t" style="right:1094.20px;top:359.00px;color:#2cf8fc">36.80</div>
<div class="t" style="right:1030.20px;top:359.00px;color:#f0f0f0">89</div>
<div class="t" style="right:681.20px;top:359.00px;color:#ff3434">40.30</div>
<div class="t" style="right:634.20px;top:359.00px;color:#ff3434">10</div>
<div class="t" style="right:593.20px;top:359.00px;color:#ff3434">-1.2<span class="pc">%</span></div>
<div class="t" style="right:549.20px;top:359.00px;color:#ff3434">40.20</div>
<div class="t" style="right:492.20px;top:359.00px;color:#ff3434">20</div>
<div class="t" style="right:448.20px;top:359.00px;color:#ff3434">40.30</div>
<div class="t" style="right:390.20px;top:359.00px;color:#ff3434">1,10</div>
<div class="t" style="right:347.20px;top:359.00px;color:#ffd820">40.80</div>
<div class="t" style="right:289.20px;top:359.00px;color:#ffd820">10,00</div>
<div class="t" style="right:245.20px;top:359.00px;color:#ff3434">40.30</div>
<div class="t" style="right:201.20px;top:359.00px;color:#ff3434">37.28</div>
<div class="t" style="right:157.20px;top:359.00px;color:#ff3434">37.10</div>
<div class="t" style="right:35.20px;top:359.00px;color:#f0f0f0">14,10</div>
<div class="t s" style="left:2px;top:377.00px;color:#ff3434">CMN</div>
<div class="t" style="right:1182.20px;top:377.00px;color:#ffd820">56.30</div>
<div class="t" style="right:1138.20px;top:377.00px;color:#ff44ff">64.70</div>
<div class="t" style="right:1094.20px;top:377.00px;color:#2cf8fc">47.90</div>
<div class="t" style="right:1030.20px;top:377.00px;color:#f0f0f0">85</div>
<div class="t" style="right:884.20px;top:377.00px;color:#ff3434">50.00</div>
<div class="t" style="right:827.20px;top:377.00px;color:#ff3434">1,00</div>
<div class="t" style="right:783.20px;top:377.00px;color:#ff3434">50.50</div>
<div class="t" style="right:725.20px;top:377.00px;color:#ff3434">20</div>
<div class="t" style="right:681.20px;top:377.00px;color:#ff3434">53.00</div>
<div class="t" style="right:634.20px;top:377.00px;color:#ff3434">20</div>
<div class="t" style="right:593.20px;top:377.00px;color:#ff3434">-5.9<span class="pc">%</span></div>
<div class="t" style="right:549.20px;top:377.00px;color:#22ff22">63.70</div>
<div class="t" style="right:492.20px;top:377.00px;color:#22ff22">20</div>
<div class="t" style="right:448.20px;top:377.00px;color:#22ff22">64.00</div>
<div class="t" style="right:390.20px;top:377.00px;color:#22ff22">2,30</div>
<div class="t" style="right:347.20px;top:377.00px;color:#ff44ff">64.70</div>
<div class="t" style="right:289.20px;top:377.00px;color:#ff44ff">3,50</div>
<div class="t" style="right:245.20px;top:377.00px;color:#ff3434">53.50</div>
<div class="t" style="right:201.20px;top:377.00px;color:#ff3434">53.35</div>
<div class="t" style="right:157.20px;top:377.00px;color:#ff3434">53.00</div>
<div class="t" style="right:93.20px;top:377.00px;color:#f0f0f0">1,20</div>
<div class="t" style="right:35.20px;top:377.00px;color:#f0f0f0">6,00</div>
<div class="t s" style="left:2px;top:394.00px;color:#2cf8fc">VNH</div>
<div class="t" style="right:1182.20px;top:394.00px;color:#ffd820">1.50</div>
<div class="t" style="right:1138.20px;top:394.00px;color:#ff44ff">1.70</div>
<div class="t" style="right:1094.20px;top:394.00px;color:#2cf8fc">1.30</div>
<div class="t" style="right:1030.20px;top:394.00px;color:#f0f0f0">86</div>
<div class="t" style="right:783.20px;top:394.00px;color:#2cf8fc">1.30</div>
<div class="t" style="right:725.20px;top:394.00px;color:#2cf8fc">7,80</div>
<div class="t" style="right:681.20px;top:394.00px;color:#2cf8fc">1.30</div>
<div class="t" style="right:634.20px;top:394.00px;color:#2cf8fc">10</div>
<div class="t" style="right:593.20px;top:394.00px;color:#2cf8fc">-13.3<span class="pc">%</span></div>
<div class="t" style="right:549.20px;top:394.00px;color:#ff3434">1.40</div>
<div class="t" style="right:492.20px;top:394.00px;color:#ff3434">35,60</div>
<div class="t" style="right:448.20px;top:394.00px;color:#ffd820">1.50</div>
<div class="t" style="right:390.20px;top:394.00px;color:#ffd820">30,00</div>
<div class="t" style="right:347.20px;top:394.00px;color:#22ff22">1.60</div>
<div class="t" style="right:289.20px;top:394.00px;color:#22ff22">7,30</div>
<div class="t" style="right:245.20px;top:394.00px;color:#ffd820">1.50</div>
<div class="t" style="right:201.20px;top:394.00px;color:#ff3434">1.40</div>
<div class="t" style="right:157.20px;top:394.00px;color:#2cf8fc">1.30</div>
<div class="t" style="right:93.20px;top:394.00px;color:#f0f0f0">7,80</div>
<div class="t" style="right:35.20px;top:394.00px;color:#f0f0f0">166,30</div>
<div class="t s" style="left:2px;top:411.00px;color:#ff3434">KGM</div>
<div class="t" style="right:1182.20px;top:411.00px;color:#ffd820">5.90</div>
<div class="t" style="right:1138.20px;top:411.00px;color:#ff44ff">6.70</div>
<div class="t" style="right:1094.20px;top:411.00px;color:#2cf8fc">5.10</div>
<div class="t" style="right:1030.20px;top:411.00px;color:#f0f0f0">73</div>
<div class="t" style="right:986.20px;top:411.00px;color:#ff3434">5.50</div>
<div class="t" style="right:928.20px;top:411.00px;color:#ff3434">1,00</div>
<div class="t" style="right:884.20px;top:411.00px;color:#ff3434">5.60</div>
<div class="t" style="right:827.20px;top:411.00px;color:#ff3434">1,20</div>
<div class="t" style="right:783.20px;top:411.00px;color:#ff3434">5.70</div>
<div class="t" style="right:725.20px;top:411.00px;color:#ff3434">2,50</div>
<div class="t" style="right:681.20px;top:411.00px;color:#ff3434">5.80</div>
<div class="t" style="right:634.20px;top:411.00px;color:#ff3434">10</div>
<div class="t" style="right:593.20px;top:411.00px;color:#ff3434">-1.7<span class="pc">%</span></div>
<div class="t" style="right:549.20px;top:411.00px;color:#ffd820">5.90</div>
<div class="t" style="right:492.20px;top:411.00px;color:#ffd820">13,00</div>
<div class="t" style="right:448.20px;top:411.00px;color:#22ff22">6.00</div>
<div class="t" style="right:390.20px;top:411.00px;color:#22ff22">2,60</div>
<div class="t" style="right:347.20px;top:411.00px;color:#22ff22">6.10</div>
<div class="t" style="right:289.20px;top:411.00px;color:#22ff22">42,00</div>
<div class="t" style="right:245.20px;top:411.00px;color:#ffd820">5.90</div>
<div class="t" style="right:201.20px;top:411.00px;color:#ff3434">5.73</div>
<div class="t" style="right:157.20px;top:411.00px;color:#ff3434">5.70</div>
<div class="t" style="right:93.20px;top:411.00px;color:#f0f0f0">7,90</div>
<div class="t" style="right:35.20px;top:411.00px;color:#f0f0f0">59,70</div>
<div class="t s" style="left:2px;top:429.00px;color:#ff3434">SAF</div>
<div class="t" style="right:1182.20px;top:429.00px;color:#ffd820">54.00</div>
<div class="t" style="right:1138.20px;top:429.00px;color:#ff44ff">59.40</div>
<div class="t" style="right:1094.20px;top:429.00px;color:#2cf8fc">48.60</div>
<div class="t" style="right:1030.20px;top:429.00px;color:#f0f0f0">64</div>
<div class="t" style="right:986.20px;top:429.00px;color:#ff3434">51.60</div>
<div class="t" style="right:928.20px;top:429.00px;color:#ff3434">10</div>
<div class="t" style="right:884.20px;top:429.00px;color:#ff3434">51.70</div>
<div class="t" style="right:827.20px;top:429.00px;color:#ff3434">10</div>
<div class="t" style="right:783.20px;top:429.00px;color:#ff3434">51.80</div>
<div class="t" style="right:725.20px;top:429.00px;color:#ff3434">10</div>
<div class="t" style="right:681.20px;top:429.00px;color:#ff3434">53.00</div>
<div class="t" style="right:634.20px;top:429.00px;color:#ff3434">1,20</div>
<div class="t" style="right:593.20px;top:429.00px;color:#ff3434">-1.9<span class="pc">%</span></div>
<div class="t" style="right:549.20px;top:429.00px;color:#ff3434">53.00</div>
<div class="t" style="right:492.20px;top:429.00px;color:#ff3434">10</div>
<div class="t" style="right:448.20px;top:429.00px;color:#ff3434">53.30</div>
<div class="t" style="right:390.20px;top:429.00px;color:#ff3434">30</div>
<div class="t" style="right:347.20px;top:429.00px;color:#ff3434">53.40</div>
<div class="t" style="right:289.20px;top:429.00px;color:#ff3434">15,90</div>
<div class="t" style="right:245.20px;top:429.00px;color:#ff3434">53.00</div>
<div class="t" style="right:157.20px;top:429.00px;color:#ff3434">53.00</div>
<div class="t" style="right:93.20px;top:429.00px;color:#f0f0f0">22,70</div>
<div class="t" style="right:35.20px;top:429.00px;color:#f0f0f0">18,80</div>
<div class="t s" style="left:2px;top:446.00px;color:#ffd820">BLT</div>
<div class="t" style="right:1182.20px;top:446.00px;color:#ffd820">26.00</div>
<div class="t" style="right:1138.20px;top:446.00px;color:#ff44ff">29.90</div>
<div class="t" style="right:1094.20px;top:446.00px;color:#2cf8fc">22.10</div>
<div class="t" style="right:1030.20px;top:446.00px;color:#f0f0f0">63</div>
<div class="t" style="right:986.20px;top:446.00px;color:#ff3434">22.60</div>
<div class="t" style="right:928.20px;top:446.00px;color:#ff3434">1,10</div>
<div class="t" style="right:884.20px;top:446.00px;color:#ff3434">23.10</div>
<div class="t" style="right:827.20px;top:446.00px;color:#ff3434">3,90</div>
<div class="t" style="right:783.20px;top:446.00px;color:#ff3434">25.70</div>
<div class="t" style="right:725.20px;top:446.00px;color:#ff3434">20</div>
<div class="t" style="right:681.20px;top:446.00px;color:#ffd820">26.00</div>
<div class="t" style="right:634.20px;top:446.00px;color:#ffd820">10</div>
<div class="t" style="right:549.20px;top:446.00px;color:#ffd820">26.00</div>
<div class="t" style="right:492.20px;top:446.00px;color:#ffd820">1,40</div>
<div class="t" style="right:448.20px;top:446.00px;color:#22ff22">26.20</div>
<div class="t" style="right:390.20px;top:446.00px;color:#22ff22">20</div>
<div class="t" style="right:347.20px;top:446.00px;color:#22ff22">26.80</div>
<div class="t" style="right:289.20px;top:446.00px;color:#22ff22">4,60</div>
<div class="t" style="right:245.20px;top:446.00px;color:#22ff22">26.20</div>
<div class="t" style="right:201.20px;top:446.00px;color:#22ff22">26.08</div>
<div class="t" style="right:157.20px;top:446.00px;color:#ff3434">25.70</div>
<div class="t" style="right:93.20px;top:446.00px;color:#f0f0f0">5,70</div>
<div class="t" style="right:35.20px;top:446.00px;color:#f0f0f0">9,40</div>
<div class="t s" style="left:2px;top:463.00px;color:#ff3434">VOC</div>
<div class="t" style="right:1182.20px;top:463.00px;color:#ffd820">11.80</div>
<div class="t" style="right:1138.20px;top:463.00px;color:#ff44ff">13.50</div>
<div class="t" style="right:1094.20px;top:463.00px;color:#2cf8fc">10.10</div>
<div class="t" style="right:1030.20px;top:463.00px;color:#f0f0f0">80</div>
<div class="t" style="right:986.20px;top:463.00px;color:#ff3434">11.30</div>
<div class="t" style="right:928.20px;top:463.00px;color:#ff3434">2,00</div>
<div class="t" style="right:884.20px;top:463.00px;color:#ff3434">11.50</div>
<div class="t" style="right:827.20px;top:463.00px;color:#ff3434">3,10</div>
<div class="t" style="right:783.20px;top:463.00px;color:#ff3434">11.60</div>
<div class="t" style="right:725.20px;top:463.00px;color:#ff3434">1,60</div>
<div class="t" style="right:681.20px;top:463.00px;color:#ff3434">11.70</div>
<div class="t" style="right:634.20px;top:463.00px;color:#ff3434">1,50</div>
<div class="t" style="right:593.20px;top:463.00px;color:#ff3434">-0.8<span class="pc">%</span></div>
<div class="t" style="right:549.20px;top:463.00px;color:#ff3434">11.70</div>
<div class="t" style="right:492.20px;top:463.00px;color:#ff3434">1,50</div>
<div class="t" style="right:448.20px;top:463.00px;color:#ffd820">11.80</div>
<div class="t" style="right:390.20px;top:463.00px;color:#ffd820">60</div>
<div class="t" style="right:347.20px;top:463.00px;color:#22ff22">11.90</div>
<div class="t" style="right:289.20px;top:463.00px;color:#22ff22">20</div>
<div class="t" style="right:245.20px;top:463.00px;color:#22ff22">12.00</div>
<div class="t" style="right:201.20px;top:463.00px;color:#ff3434">11.74</div>
<div class="t" style="right:157.20px;top:463.00px;color:#ff3434">11.70</div>
<div class="t s" style="left:2px;top:481.00px;color:#22ff22">THP</div>
<div class="t" style="right:1182.20px;top:481.00px;color:#ffd820">8.30</div>
<div class="t" style="right:1138.20px;top:481.00px;color:#ff44ff">9.50</div>
<div class="t" style="right:1094.20px;top:481.00px;color:#2cf8fc">7.10</div>
<div class="t" style="right:1030.20px;top:481.00px;color:#f0f0f0">58</div>
<div class="t" style="right:986.20px;top:481.00px;color:#ffd820">8.30</div>
<div class="t" style="right:928.20px;top:481.00px;color:#ffd820">70</div>
<div class="t" style="right:884.20px;top:481.00px;color:#22ff22">9.20</div>
<div class="t" style="right:827.20px;top:481.00px;color:#22ff22">1,00</div>
<div class="t" style="right:783.20px;top:481.00px;color:#22ff22">9.30</div>
<div class="t" style="right:725.20px;top:481.00px;color:#22ff22">80</div>
<div class="t" style="right:681.20px;top:481.00px;color:#22ff22">9.30</div>
<div class="t" style="right:634.20px;top:481.00px;color:#22ff22">1,20</div>
<div class="t" style="right:593.20px;top:481.00px;color:#22ff22">12.0<span class="pc">%</span></div>
<div class="t" style="right:549.20px;top:481.00px;color:#22ff22">9.40</div>
<div class="t" style="right:492.20px;top:481.00px;color:#22ff22">80</div>
<div class="t" style="right:245.20px;top:481.00px;color:#22ff22">9.30</div>
<div class="t" style="right:157.20px;top:481.00px;color:#22ff22">9.30</div>
<div class="t" style="right:93.20px;top:481.00px;color:#f0f0f0">2,50</div>
<div class="t" style="right:35.20px;top:481.00px;color:#f0f0f0">80</div>
<svg class="a" style="left:0;top:0" width="1273" height="508"><polygon points="190,18.5 190,24 186.3,21.25" fill="#e4e4e4"/><polygon points="241.3,18.5 241.3,24 245,21.25" fill="#e4e4e4"/><polygon points="213,37 219.2,37 216.1,40.2" fill="#e4e4e4"/><polygon points="650.2,28.6 650.2,34 646.8,31.3" fill="#e4e4e4"/><polygon points="677.5,28.6 677.5,34 680.9,31.3" fill="#e4e4e4"/><polygon points="1250.2,28.6 1250.2,34 1246.8,31.3" fill="#e4e4e4"/></svg>
<div class="a" style="left:20px;top:65px;width:116px;height:20px;background:rgba(238,131,7,0.87);border-radius:2px"></div>
<svg class="a" style="left:66px;top:61px" width="14" height="5"><polygon points="3.5,4.5 7,1 10.5,4.5" fill="rgba(238,131,7,0.87)"/></svg>
<div class="a" style="left:37px;top:69.5px;font-size:8.9px;line-height:11px;color:#fbf3ea;white-space:nowrap;-webkit-text-stroke:0.2px #fbf3ea">Click đúp để đặt lệnh</div>
<div class="a" style="left:0;top:500px;width:1273px;height:8px;background:#000"></div>
<div class="a" style="left:0;top:500px;width:76px;height:8px;background:#f7931e"></div>
<svg class="a" style="left:16px;top:504px" width="10" height="8"><path d="M0.5,1.5 H2.5 L4,6 H9 L9.5,2.5 H3" fill="none" stroke="#fff" stroke-width="1.3"/></svg>
<div class="a" style="left:26.5px;top:503.6px;font-size:8px;line-height:10px;color:#fff;white-space:nowrap;-webkit-text-stroke:0.2px #fff">Đặt lệnh</div>
<div class="a" style="left:78px;top:502px;width:174px;height:10px;background:#fff;border-radius:2px"></div>
<div class="a" style="left:87px;top:504.6px;font-size:8px;line-height:10px;color:#1a2433;white-space:nowrap;font-weight:bold">001C009715 - Chọn tiểu khoản</div>
<div class="a" style="left:957px;top:504px;font-size:8px;line-height:10px;color:#1ee81e;white-space:nowrap">Price streaming connected</div>
<div class="a" style="left:1062px;top:505px;width:1px;height:3px;background:#ddd"></div>
<div class="a" style="left:1069px;top:506px;width:2px;height:2px;background:#f0e0c0"></div>
<div class="a" style="left:1075px;top:503.8px;font-size:8px;line-height:10px;color:#eee;white-space:nowrap">Bảng giá</div>
<div class="a" style="left:1128.5px;top:505.5px;width:5px;height:5px;background:#f4f4f4;border-radius:2.5px 2.5px 0 0"></div>
<div class="a" style="left:1137px;top:503.8px;font-size:8px;line-height:10px;color:#eee;white-space:nowrap">Thông báo</div>
<div class="a" style="left:1192px;top:506px;width:9px;height:4px;border:1.2px solid #eee;background:#000"></div>
<div class="a" style="left:1203px;top:503.8px;font-size:8px;line-height:10px;color:#eee;white-space:nowrap">Tài sản</div>
<div class="a" style="left:1241px;top:505px;width:6px;height:5px;background:#dfe6f0"></div>
<div class="a" style="left:1251px;top:503.8px;font-size:8px;line-height:10px;color:#eee;white-space:nowrap">Danh mục</div>
</body></html>
